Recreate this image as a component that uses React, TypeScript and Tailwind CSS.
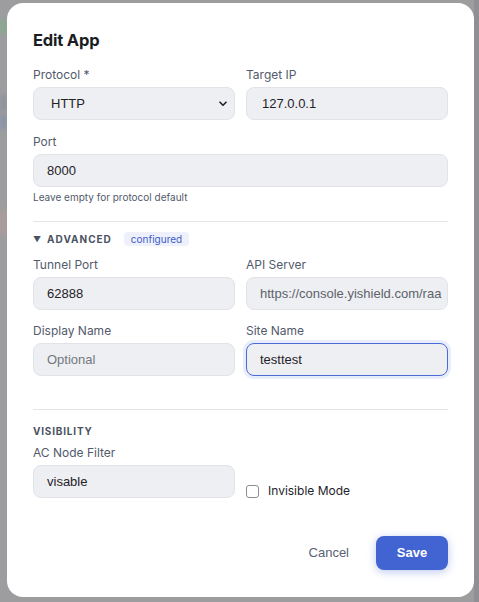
import React from "react";

const labelCls = "block h-[18px] mb-[3px] text-[12px] leading-[18px] text-[#525a6b] font-['Inter',sans-serif]";
const baseInput =
  "w-full h-[33px] rounded-[8px] border bg-[#eeeff2] px-[13px] text-[13px] text-[#1f2328] outline-none font-['Liberation_Sans',Arial,sans-serif] flex items-center";
const inputCls = baseInput + " border-[#e1e3e8]";

function Field({ label, children }: { label: string; children: React.ReactNode }) {
  return (
    <div className="flex flex-col min-w-0">
      <span className={labelCls}>{label}</span>
      {children}
    </div>
  );
}

export default function App() {
  return (
    <div className="w-[479px] h-[602px] bg-[#9d9d9f] relative overflow-hidden font-['Inter',sans-serif]">
      <div className="absolute left-0 top-[20px] w-[7px] h-[14px] bg-[#7fae8a] blur-[2px] opacity-70" />
      <div className="absolute left-0 top-[95px] w-[7px] h-[16px] bg-[#8a8f9a] blur-[2px] opacity-70" />
      <div className="absolute left-0 top-[115px] w-[7px] h-[14px] bg-[#7d8fae] blur-[2px] opacity-60" />
      <div className="absolute left-0 top-[210px] w-[7px] h-[24px] bg-[#b89a9a] blur-[2px] opacity-60" />
      <div className="absolute left-[474px] top-0 w-[5px] h-[602px] bg-[#8f9094]" />
      <div className="absolute left-[7px] top-[3px] w-[467px] h-[594px] bg-white rounded-[16px] pt-[23px] px-[26px] flex flex-col">
        <h2 className="text-[16.5px] leading-[28px] font-bold text-[#1a1d24] tracking-[-0.2px]">Edit App</h2>

        <div className="grid grid-cols-2 gap-x-[11px] mt-[12px]">
          <Field label="Protocol *">
            <div className="relative">
              <div className={inputCls + " pl-[17px]"}>HTTP</div>
              <svg className="absolute right-[8px] top-[14px]" width="8" height="6" viewBox="0 0 8 6">
                <path d="M1 1.2 L4 4.3 L7 1.2" fill="none" stroke="#222" strokeWidth="1.6" strokeLinecap="round" strokeLinejoin="round" />
              </svg>
            </div>
          </Field>
          <Field label="Target IP">
            <div className={inputCls + " pl-[15px]"}>127.0.0.1</div>
          </Field>
        </div>

        <div className="mt-[13px]">
          <Field label="Port">
            <div className={inputCls}>8000</div>
          </Field>
          <p className="mt-[3px] text-[10px] leading-[14px] text-[#525a6b]">Leave empty for protocol default</p>
        </div>

        <div className="mt-[17px] h-px bg-[#e3e5e9]" />

        <div className="mt-[10px] flex items-center h-[14px]">
          <span className="text-[8px] text-[#4b5262] mr-[6px]">▼</span>
          <span className="text-[10px] font-bold tracking-[1px] text-[#4b5262]">ADVANCED</span>
          <span className="ml-[12px] px-[7px] h-[14px] leading-[14px] rounded-[4px] bg-[#eef1fb] text-[10px] text-[#3f5cc7]">configured</span>
        </div>

        <div className="grid grid-cols-2 gap-x-[11px] gap-y-[12px] mt-[10px]">
          <Field label="Tunnel Port">
            <div className={inputCls}>62888</div>
          </Field>
          <Field label="API Server">
            <div className={inputCls + " overflow-hidden whitespace-nowrap text-[#5d626b]"}>https://console.yishield.com/raa</div>
          </Field>
          <Field label="Display Name">
            <div className={inputCls + " text-[#73777f]"}>Optional</div>
          </Field>
          <Field label="Site Name">
            <div className={baseInput + " border-[#4a6ad6] shadow-[0_0_0_3px_#e8edfb]"}>testtest</div>
          </Field>
        </div>

        <div className="mt-[33px] h-px bg-[#e3e5e9]" />

        <div className="mt-[14px] text-[10px] leading-[14px] font-bold tracking-[0.8px] text-[#4b5262]">VISIBILITY</div>

        <div className="grid grid-cols-2 gap-x-[11px] mt-[6px]">
          <Field label="AC Node Filter">
            <div className={inputCls}>visable</div>
          </Field>
          <div className="flex items-end mb-[-2px]">
            <label className="flex items-center h-[18px]">
              <span className="w-[13px] h-[13px] rounded-[3px] border border-[#8a8d93] bg-white" />
              <span className="ml-[9px] text-[12px] text-[#1f2328]">Invisible Mode</span>
            </label>
          </div>
        </div>

        <div className="mt-auto mb-[27px] flex justify-end items-center">
          <span className="text-[13px] text-[#5a6172] font-['Liberation_Sans',Arial,sans-serif] mr-[27px]">Cancel</span>
          <button className="w-[72px] h-[34px] rounded-[8px] bg-[#4264d2] text-white text-[13px] font-bold shadow-[0_2px_8px_rgba(66,100,210,0.35)] font-['Liberation_Sans',Arial,sans-serif]">
            Save
          </button>
        </div>
      </div>
    </div>
  );
}
